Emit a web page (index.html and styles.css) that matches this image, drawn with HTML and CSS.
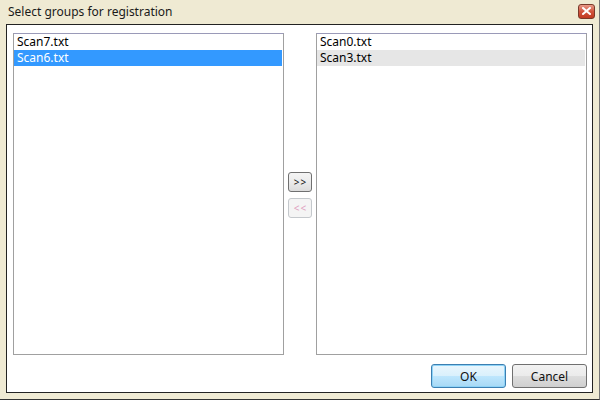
FILE: index.html
```html
<!DOCTYPE html>
<html>
<head>
<meta charset="utf-8">
<link rel="stylesheet" href="styles.css">
</head>
<body>
<div class="window">
  <div class="titlebar">
    <span class="title">Select groups for registration</span>
    <span class="close"><svg width="9" height="8" viewBox="0 0 9 8"><path d="M1 1 L8 7 M8 1 L1 7" stroke="#fff" stroke-width="2" stroke-linecap="square"/></svg></span>
  </div>
  <div class="client">
    <div class="lists">
      <div class="listbox">
        <div class="item">Scan7.txt</div>
        <div class="item selected">Scan6.txt</div>
      </div>
      <div class="mover">
        <button class="small">&gt;&gt;</button>
        <button class="small disabled">&lt;&lt;</button>
      </div>
      <div class="listbox">
        <div class="item">Scan0.txt</div>
        <div class="item inactive">Scan3.txt</div>
      </div>
    </div>
    <div class="actions">
      <button class="btn default">OK</button>
      <button class="btn">Cancel</button>
    </div>
  </div>
</div>
</body>
</html>
```
FILE: styles.css
```css
html, body {
  margin: 0;
  padding: 0;
}
body {
  width: 600px;
  height: 400px;
  overflow: hidden;
  font-family: "Noto Sans", "Open Sans", sans-serif;
  font-size: 12px;
  color: #000;
}
.window {
  width: 600px;
  height: 400px;
  box-sizing: border-box;
  background: #efead3;
  border-right: 1px solid #777;
  border-bottom: 1px solid #333;
  display: flex;
  flex-direction: column;
  padding: 0 6px 6px 6px;
}
.titlebar {
  height: 24px;
  flex: none;
  display: flex;
  align-items: center;
  justify-content: space-between;
  padding: 0 0 0 2px;
}
.title {
  font-size: 12px;
  color: #1a1a1a;
  position: relative;
  top: -1px;
}
.close {
  width: 17px;
  height: 15px;
  box-sizing: border-box;
  border: 1px solid #7a3a2a;
  border-radius: 3px;
  background: linear-gradient(#e89a88, #d2553f 50%, #c23a22);
  display: flex;
  align-items: center;
  justify-content: center;
  margin-right: -2px;
  position: relative;
  top: -1px;
}
.client {
  flex: 1;
  background: #fff;
  border: 1px solid #222;
  display: flex;
  flex-direction: column;
  padding: 8px 5px 4px 6px;
}
.lists {
  display: flex;
  height: 322px;
}
.listbox {
  width: 272px;
  box-sizing: border-box;
  border: 1px solid #a0a0a0;
  border-top-color: #9a9ab8;
  padding: 0 1px 0 0;
  background: #fff;
}
.item {
  height: 16px;
  line-height: 16px;
  padding-left: 3px;
  white-space: nowrap;
}
.item.selected {
  background: #3399ff;
  color: #fff;
}
.item.inactive {
  background: #e6e6e6;
}
.mover {
  width: 32px;
  display: flex;
  flex-direction: column;
  align-items: center;
  justify-content: center;
  gap: 6px;
  padding-top: 1px;
}
button {
  font-family: inherit;
  margin: 0;
  cursor: default;
}
.small {
  width: 24px;
  height: 20px;
  box-sizing: border-box;
  border: 1px solid #707070;
  border-radius: 3px;
  background: linear-gradient(#f4f4f4, #ebebeb 50%, #dcdcdc);
  font-size: 10px;
  letter-spacing: 1px;
  padding: 0 0 0 1px;
  color: #111;
  line-height: 18px;
}
.small.disabled {
  border-color: #c4c8cc;
  background: #f4f4f4;
  color: #e0a0c0;
}
.actions {
  display: flex;
  justify-content: flex-end;
  gap: 6px;
  margin-top: 9px;
}
.btn {
  width: 75px;
  height: 24px;
  box-sizing: border-box;
  border: 1px solid #707070;
  border-radius: 3px;
  background: linear-gradient(#f2f2f2, #ebebeb 50%, #dddddd 51%, #cfcfcf);
  font-size: 12px;
  color: #111;
  padding: 0;
}
.btn.default {
  border-color: #3c7fb1;
  background: linear-gradient(#eaf6fd, #d9f0fc 50%, #bee6fd 51%, #a7d9f5);
  box-shadow: inset 0 0 0 1px #8ed3f7;
}
```
